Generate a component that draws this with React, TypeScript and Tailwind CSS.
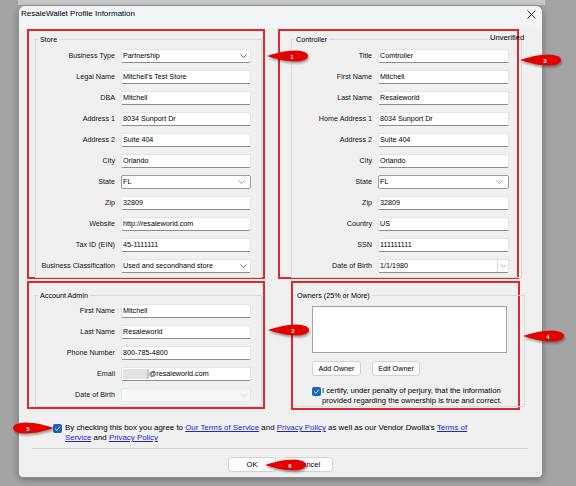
import React from "react";

function Chevron({ color = "#333" }: { color?: string }) {
  return (
    <svg width="7" height="4" viewBox="0 0 7 4" className="shrink-0">
      <path d="M0.5 0.5 L3.5 3.5 L6.5 0.5" stroke={color} fill="none" strokeWidth="0.8" />
    </svg>
  );
}

function Check() {
  return (
    <div className="w-[9px] h-[9px] shrink-0 bg-[#1665c0] rounded-[2px] flex items-center justify-center">
      <svg width="9" height="9" viewBox="0 0 9 9">
        <path d="M2.2 4.7 L3.8 6.2 L6.9 2.8" stroke="#fff" fill="none" strokeWidth="0.9" />
      </svg>
    </div>
  );
}

type Kind = "text" | "combo" | "state" | "date" | "disabled";

function Field({ value, kind = "text", w }: { value?: React.ReactNode; kind?: Kind; w: string }) {
  if (kind === "state") {
    return (
      <div className={`${w} h-[14px] bg-white border border-[#9c9c9c] rounded-[2px] pl-[1px] pr-[5px] flex items-center justify-between`}>
        <span>{value}</span>
        <Chevron color="#8a8a8a" />
      </div>
    );
  }
  if (kind === "combo") {
    return (
      <div className={`${w} h-[14px] bg-white border border-[#e4e4e4] border-b-[#8d8d8d] rounded-[2px] pl-[1px] pr-[3px] flex items-center justify-between`}>
        <span>{value}</span>
        <Chevron color="#444" />
      </div>
    );
  }
  if (kind === "date") {
    return (
      <div className={`${w} h-[14px] bg-white border border-[#e4e4e4] border-b-[#8d8d8d] rounded-[2px] pl-[1px] flex items-center`}>
        <span className="flex-1">{value}</span>
        <div className="w-[11px] h-full border-l border-[#d8d8d8] flex items-center justify-center">
          <Chevron color="#999" />
        </div>
      </div>
    );
  }
  if (kind === "disabled") {
    return (
      <div className={`${w} h-[14px] bg-[#f6f6f6] border border-[#e8e8e8] rounded-[2px] pr-[3px] flex items-center justify-end`}>
        <Chevron color="#c4c4c4" />
      </div>
    );
  }
  return (
    <div className={`${w} h-[14px] bg-white border border-[#e4e4e4] border-b-[#8d8d8d] rounded-[2px] pl-[1px] flex items-center whitespace-nowrap`}>
      {value}
    </div>
  );
}

function Row({
  label,
  labelW,
  inputW,
  value,
  kind,
}: {
  label: string;
  labelW: string;
  inputW: string;
  value?: React.ReactNode;
  kind?: Kind;
}) {
  return (
    <div className="flex items-center h-[21px]">
      <div className={`${labelW} text-right whitespace-nowrap text-[#111]`}>{label}</div>
      <div className="ml-[6px]">
        <Field value={value} kind={kind} w={inputW} />
      </div>
    </div>
  );
}

function Callout({ num, dir = "left" }: { num: string; dir?: "left" | "right" }) {
  const d =
    dir === "left"
      ? "M1 7 C9 4.5 19 1.5 30 1.5 A12 5.5 0 0 1 30 12.5 C19 12.5 9 9.5 1 7 Z"
      : "M43 7 C35 4.5 25 1.5 14 1.5 A12 5.5 0 0 0 14 12.5 C25 12.5 35 9.5 43 7 Z";
  const tx = dir === "left" ? 26 : 17;
  return (
    <svg width="46" height="16" viewBox="0 0 46 16" className="drop-shadow-[1px_2px_1px_rgba(0,0,0,0.35)]">
      <path d={d} fill="#e40000" />
      <text x={tx} y="9.6" fontSize="6" fontWeight="bold" fill="#fff" textAnchor="middle" fontFamily="Liberation Sans, Arial, sans-serif">
        {num}
      </text>
    </svg>
  );
}

export default function App() {
  const sL = "w-[79px]";
  const sI = "w-[130px]";
  const cL = "w-[80px]";
  const cI = "w-[131px]";
  return (
    <div className="w-[576px] h-[486px] bg-[#a4a4a4] relative overflow-hidden font-['Liberation_Sans',Arial,sans-serif] text-[7.2px] leading-[9px] text-black">
      <div className="ml-[18px] w-[527px] h-[5px] bg-[#c9c9c9]" />
      <div className="ml-[18px] w-[525px] h-[473px] bg-[#f0f0f0] border border-[#8f8f8f] rounded-t-[7px] rounded-b-[5px] shadow-[0_2px_6px_rgba(0,0,0,0.3)] flex flex-col">
        {/* title bar */}
        <div className="h-[22px] bg-[#f3f4f6] rounded-t-[7px] flex items-start justify-between pl-[2px] pr-[6px] pt-[3px]">
          <span className="text-[8px] leading-[10px]">ResaleWallet Profile Information</span>
          <svg width="9" height="9" viewBox="0 0 9 9" className="mt-[1px]">
            <path d="M0.5 0.5 L8.5 8.5 M8.5 0.5 L0.5 8.5" stroke="#222" strokeWidth="0.9" />
          </svg>
        </div>

        {/* row 1 */}
        <div className="mt-[1px] ml-[8px] flex gap-[13px]">
          <div className="w-[238px] h-[250px] border-2 border-[#db2a2a]">
            <fieldset className="mt-[4px] ml-[6px] mr-[1px] border border-[#dadada] pb-[1px]">
              <legend className="ml-[2px] px-[2px] leading-[9px]">Store</legend>
              <div className="pt-[1px]">
                <Row label="Business Type" labelW={sL} inputW={sI} value="Partnership" kind="combo" />
                <Row label="Legal Name" labelW={sL} inputW={sI} value="Mitchell's Test Store" />
                <Row label="DBA" labelW={sL} inputW={sI} value="Mitchell" />
                <Row label="Address 1" labelW={sL} inputW={sI} value="8034 Sunport Dr" />
                <Row label="Address 2" labelW={sL} inputW={sI} value="Suite 404" />
                <Row label="City" labelW={sL} inputW={sI} value="Orlando" />
                <Row label="State" labelW={sL} inputW={sI} value="FL" kind="state" />
                <Row label="Zip" labelW={sL} inputW={sI} value="32809" />
                <Row label="Website" labelW={sL} inputW={sI} value="http://resaleworld.com" />
                <Row label="Tax ID (EIN)" labelW={sL} inputW={sI} value="45-1111111" />
                <Row label="Business Classification" labelW={sL} inputW={sI} value="Used and secondhand store" kind="combo" />
              </div>
            </fieldset>
          </div>

          <div className="w-[241px] h-[250px] border-2 border-[#db2a2a] relative">
            <fieldset className="mt-[4px] ml-[11px] mr-[-5px] border border-[#dadada] pb-[1px]">
              <legend className="ml-[2px] px-[2px] leading-[9px]">Controller</legend>
              <div className="pt-[1px]">
                <Row label="Title" labelW={cL} inputW={cI} value="Comtroller" />
                <Row label="First Name" labelW={cL} inputW={cI} value="Mitchell" />
                <Row label="Last Name" labelW={cL} inputW={cI} value="Resaleworld" />
                <Row label="Home Address 1" labelW={cL} inputW={cI} value="8034 Sunport Dr" />
                <Row label="Address 2" labelW={cL} inputW={cI} value="Suite 404" />
                <Row label="City" labelW={cL} inputW={cI} value="Orlando" />
                <Row label="State" labelW={cL} inputW={cI} value="FL" kind="state" />
                <Row label="Zip" labelW={cL} inputW={cI} value="32809" />
                <Row label="Country" labelW={cL} inputW={cI} value="US" />
                <Row label="SSN" labelW={cL} inputW={cI} value="111111111" />
                <Row label="Date of Birth" labelW={cL} inputW={cI} value="1/1/1980" kind="date" />
              </div>
            </fieldset>
            <span className="absolute left-[210px] top-[2px] text-[7.6px] leading-[9px]">Unverified</span>
          </div>
        </div>

        {/* row 2 */}
        <div className="mt-[2px] ml-[8px] flex items-start">
          <div className="w-[238px] h-[128px] border-2 border-[#db2a2a]">
            <fieldset className="mt-[8px] ml-[6px] mr-[1px] border border-[#dadada] pb-[1px]">
              <legend className="ml-[2px] px-[2px] leading-[9px]">Account Admin</legend>
              <div>
                <Row label="First Name" labelW={sL} inputW={sI} value="Mitchell" />
                <Row label="Last Name" labelW={sL} inputW={sI} value="Resaleworld" />
                <Row label="Phone Number" labelW={sL} inputW={sI} value="800-785-4800" />
                <Row
                  label="Email"
                  labelW={sL}
                  inputW={sI}
                  value={
                    <span className="flex items-center">
                      <span className="w-[24px] h-[10px] bg-[#e2e2e2] inline-block" />
                      <span className="w-[2px] h-[10px] bg-[#c4c4c4] inline-block" />
                      <span>@resaleworld.com</span>
                    </span>
                  }
                />
                <Row label="Date of Birth" labelW={sL} inputW={sI} kind="disabled" />
              </div>
            </fieldset>
          </div>

          <div className="ml-[26px] w-[229px] h-[129px] border-2 border-[#db2a2a]">
            <fieldset className="mt-[8px] mr-[-7px] border border-[#dadada] border-l-transparent pb-[1px]">
              <legend className="ml-[1px] px-[2px] leading-[9px]">Owners (25% or More)</legend>
              <div className="ml-[18px] mt-[6px] w-[195px] h-[47px] bg-white border border-[#a3a3a3]" />
              <div className="ml-[18px] mt-[8px] flex gap-[11px]">
                <div className="w-[49px] h-[15px] bg-[#fdfdfd] border border-[#d2d2d2] rounded-[3px] flex items-center justify-center">
                  Add Owner
                </div>
                <div className="w-[48px] h-[15px] bg-[#fdfdfd] border border-[#d2d2d2] rounded-[3px] flex items-center justify-center">
                  Edit Owner
                </div>
              </div>
              <div className="ml-[18px] mt-[10px] flex gap-[1px] items-start text-[7.7px] leading-[9.5px]">
                <div className="mt-[1px]">
                  <Check />
                </div>
                <div>
                  I certify, under penalty of perjury, that the information
                  <br />
                  provided regarding the ownership is true and correct.
                </div>
              </div>
            </fieldset>
          </div>
        </div>

        {/* agreement */}
        <div className="mt-[13px] ml-[34px] flex items-start gap-[3px] text-[7.9px] leading-[10px]">
          <div className="mt-[1px]">
            <Check />
          </div>
          <div className="whitespace-nowrap">
            By checking this box you agree to{" "}
            <span className="text-[#2323d6] underline">Our Terms of Service</span> and{" "}
            <span className="text-[#2323d6] underline">Privacy Policy</span> as well as our Vendor Dwolla's{" "}
            <span className="text-[#2323d6] underline">Terms of </span>
            <br />
            <span className="text-[#2323d6] underline">Service</span> and{" "}
            <span className="text-[#2323d6] underline">Privacy Policy</span>
          </div>
        </div>

        <div className="mt-[5px] ml-[13px] w-[496px] h-[1px] bg-[#d4d4d4]" />

        <div className="mt-[8px] ml-[209px] flex gap-[8px] text-[7.5px]">
          <div className="w-[48px] h-[15px] bg-[#fdfdfd] border border-[#d2d2d2] rounded-[3px] flex items-center justify-center">
            OK
          </div>
          <div className="w-[49px] h-[15px] bg-[#fdfdfd] border border-[#d2d2d2] rounded-[3px] flex items-center justify-center">
            Cancel
          </div>
        </div>
      </div>

      {/* callouts */}
      <div className="absolute left-[266px] top-[49px]">
        <Callout num="1" />
      </div>
      <div className="absolute left-[519px] top-[53px]">
        <Callout num="3" />
      </div>
      <div className="absolute left-[267px] top-[323px]">
        <Callout num="2" />
      </div>
      <div className="absolute left-[522px] top-[329px]">
        <Callout num="4" />
      </div>
      <div className="absolute left-[11px] top-[421px]">
        <Callout num="5" dir="right" />
      </div>
      <div className="absolute left-[264px] top-[458px]">
        <Callout num="6" />
      </div>
    </div>
  );
}
